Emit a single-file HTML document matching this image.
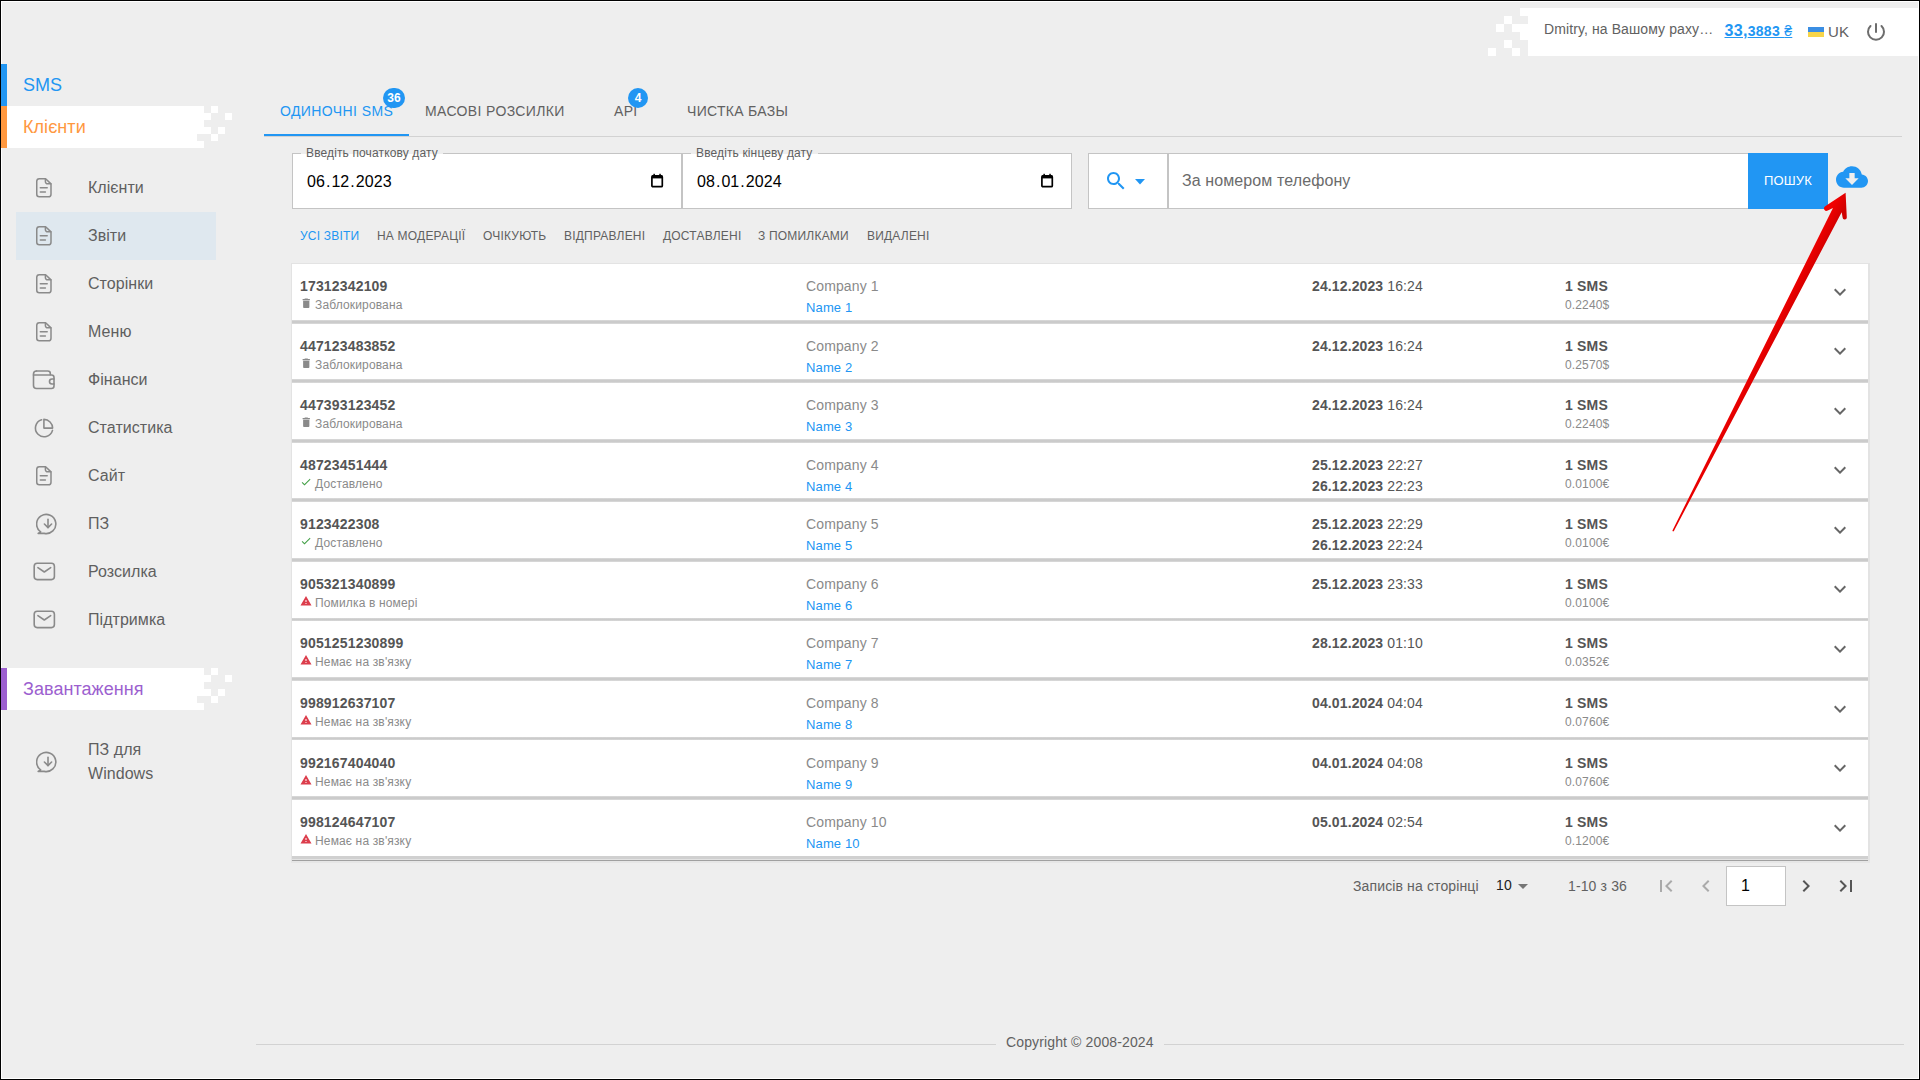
<!DOCTYPE html>
<html><head><meta charset="utf-8">
<style>
*{box-sizing:border-box;margin:0;padding:0}
html,body{width:1920px;height:1080px;overflow:hidden;background:#eeeeee;font-family:"Liberation Sans",sans-serif;color:#555}
.a{position:absolute}
.t{position:absolute;white-space:nowrap;line-height:normal}
#frame1{position:absolute;left:0;top:0;width:1920px;height:1080px;border:1px solid #000;z-index:100;pointer-events:none}
#frame2{position:absolute;left:1px;top:1px;width:1918px;height:1078px;border:1px solid #fff;z-index:0}
.ico{position:absolute;fill:none;stroke:#8a8a8a;stroke-width:1.6;stroke-linecap:round;stroke-linejoin:round}
</style></head><body>
<div id="frame2"></div>

<svg class="a" style="left:1480px;top:8px" width="440" height="48" viewBox="0 0 440 48"><g fill="#fff">
<rect x="40" y="0" width="400" height="8"/><rect x="48" y="8" width="392" height="8"/><rect x="32" y="16" width="408" height="8"/>
<rect x="40" y="24" width="400" height="8"/><rect x="48" y="32" width="392" height="8"/><rect x="48" y="40" width="392" height="8"/>
<rect x="24" y="8" width="8" height="8"/><rect x="16" y="16" width="8" height="8"/><rect x="24" y="32" width="8" height="8"/>
<rect x="32" y="40" width="8" height="8"/><rect x="8" y="40" width="8" height="8"/></g></svg>
<div class="t" style="left:1544px;top:21px;font-size:14px;color:#616161;letter-spacing:0.1px">Dmitry, на Вашому раху…</div>
<div class="t" style="left:1724.5px;top:22px;color:#2196f3;text-decoration:underline;font-size:16px;font-weight:bold;letter-spacing:0.3px">33,<span style="font-size:14px">3883 <span style="font-weight:normal">₴</span></span></div>
<div class="a" style="left:1808px;top:27px;width:16px;height:5px;background:#3b8ee3"></div>
<div class="a" style="left:1808px;top:32px;width:16px;height:5px;background:#f7d54a"></div>
<div class="t" style="left:1828px;top:23px;font-size:15px;color:#616161;;letter-spacing:0.05px">UK</div>
<svg class="a" style="left:1864px;top:21px" width="24" height="22" viewBox="0 0 24 22">
<path d="M12 2.9 V11" stroke="#6d6d6d" stroke-width="2" fill="none" stroke-linecap="round"/>
<path d="M6.5 5 A8 8 0 1 0 17.5 5" stroke="#6d6d6d" stroke-width="2" fill="none" stroke-linecap="round"/></svg>
<div class="a" style="left:1px;top:64px;width:6px;height:42px;background:#2196f3"></div>
<div class="t" style="left:23px;top:75px;font-size:18px;color:#2196f3;;letter-spacing:0.05px">SMS</div>
<div class="a" style="left:1px;top:106px;width:6px;height:42px;background:#ff983f"></div>
<svg class="a" style="left:7px;top:106px" width="230" height="42" viewBox="0 0 230 42"><g fill="#fff">
<rect x="0" y="0" width="197" height="7"/><rect x="0" y="7" width="204" height="7"/><rect x="0" y="14" width="197" height="7"/>
<rect x="0" y="21" width="204" height="7"/><rect x="0" y="28" width="190" height="7"/><rect x="0" y="35" width="197" height="7"/>
<rect x="204" y="0" width="7" height="7"/><rect x="218" y="7" width="7" height="7"/><rect x="211" y="21" width="7" height="7"/>
<rect x="204" y="28" width="7" height="7"/></g></svg>
<div class="t" style="left:23px;top:117px;font-size:18px;color:#ff983f;;letter-spacing:0.05px">Клієнти</div>
<div class="a" style="left:16px;top:212px;width:200px;height:48px;background:#dfe8ef"></div>
<svg class="ico" style="left:36px;top:178.4px;stroke-width:1.5" width="16" height="20" viewBox="0 0 16 20"><path d="M3.3 0.75 H9.6 L15 5.9 V16.2 A2.6 2.6 0 0 1 12.4 18.8 H3.3 A2.6 2.6 0 0 1 0.75 16.2 V3.3 A2.6 2.6 0 0 1 3.3 0.75 Z"/><path d="M9.4 0.9 V3.6 A2.2 2.2 0 0 0 11.6 5.8 H14.8"/><path d="M4.3 9.8 H11.2"/><path d="M4.3 14 H9.4"/></svg>
<div class="t" style="left:88px;top:179px;font-size:16px;color:#5f5f5f;;letter-spacing:0.05px">Клієнти</div>
<svg class="ico" style="left:36px;top:226.4px;stroke-width:1.5" width="16" height="20" viewBox="0 0 16 20"><path d="M3.3 0.75 H9.6 L15 5.9 V16.2 A2.6 2.6 0 0 1 12.4 18.8 H3.3 A2.6 2.6 0 0 1 0.75 16.2 V3.3 A2.6 2.6 0 0 1 3.3 0.75 Z"/><path d="M9.4 0.9 V3.6 A2.2 2.2 0 0 0 11.6 5.8 H14.8"/><path d="M4.3 9.8 H11.2"/><path d="M4.3 14 H9.4"/></svg>
<div class="t" style="left:88px;top:227px;font-size:16px;color:#5f5f5f;;letter-spacing:0.05px">Звіти</div>
<svg class="ico" style="left:36px;top:274.4px;stroke-width:1.5" width="16" height="20" viewBox="0 0 16 20"><path d="M3.3 0.75 H9.6 L15 5.9 V16.2 A2.6 2.6 0 0 1 12.4 18.8 H3.3 A2.6 2.6 0 0 1 0.75 16.2 V3.3 A2.6 2.6 0 0 1 3.3 0.75 Z"/><path d="M9.4 0.9 V3.6 A2.2 2.2 0 0 0 11.6 5.8 H14.8"/><path d="M4.3 9.8 H11.2"/><path d="M4.3 14 H9.4"/></svg>
<div class="t" style="left:88px;top:275px;font-size:16px;color:#5f5f5f;;letter-spacing:0.05px">Сторінки</div>
<svg class="ico" style="left:36px;top:322.4px;stroke-width:1.5" width="16" height="20" viewBox="0 0 16 20"><path d="M3.3 0.75 H9.6 L15 5.9 V16.2 A2.6 2.6 0 0 1 12.4 18.8 H3.3 A2.6 2.6 0 0 1 0.75 16.2 V3.3 A2.6 2.6 0 0 1 3.3 0.75 Z"/><path d="M9.4 0.9 V3.6 A2.2 2.2 0 0 0 11.6 5.8 H14.8"/><path d="M4.3 9.8 H11.2"/><path d="M4.3 14 H9.4"/></svg>
<div class="t" style="left:88px;top:323px;font-size:16px;color:#5f5f5f;;letter-spacing:0.05px">Меню</div>
<svg class="ico" style="left:32px;top:369.4px" width="24" height="21" viewBox="0 0 24 21"><path d="M4.5 2 H15.8 A2.5 2.5 0 0 1 18.3 4.5 V5.8"/><path d="M4.5 2 A3 3 0 0 0 1.5 5 V16.5 A3 3 0 0 0 4.5 19.5 H19.5 A2.5 2.5 0 0 0 22 17 V15"/><path d="M1.5 6 H19.5 A2.5 2.5 0 0 1 22 8.5 V10"/><path d="M22 10 H20 A2.5 2.5 0 0 0 20 15 H22 Z"/></svg>
<div class="t" style="left:88px;top:371px;font-size:16px;color:#5f5f5f;;letter-spacing:0.05px">Фінанси</div>
<svg class="ico" style="left:33px;top:416.9px" width="22" height="22" viewBox="0 0 22 22"><path d="M10.9 11.1 V2.4 A8.7 8.7 0 0 1 19.6 11.1 Z"/><path d="M8.6 2.7 A8.7 8.7 0 1 0 19.5 13.4"/></svg>
<div class="t" style="left:88px;top:419px;font-size:16px;color:#5f5f5f;;letter-spacing:0.05px">Статистика</div>
<svg class="ico" style="left:36px;top:466.4px;stroke-width:1.5" width="16" height="20" viewBox="0 0 16 20"><path d="M3.3 0.75 H9.6 L15 5.9 V16.2 A2.6 2.6 0 0 1 12.4 18.8 H3.3 A2.6 2.6 0 0 1 0.75 16.2 V3.3 A2.6 2.6 0 0 1 3.3 0.75 Z"/><path d="M9.4 0.9 V3.6 A2.2 2.2 0 0 0 11.6 5.8 H14.8"/><path d="M4.3 9.8 H11.2"/><path d="M4.3 14 H9.4"/></svg>
<div class="t" style="left:88px;top:467px;font-size:16px;color:#5f5f5f;;letter-spacing:0.05px">Сайт</div>
<svg class="ico" style="left:35.5px;top:511.9px" width="24" height="24" viewBox="0 0 24 24"><path d="M4.6 19.8 A9.6 9.6 0 1 1 8.2 21.4 H2.2 Z"/><path d="M12 7.4 V15.4"/><path d="M8.4 12 L12 15.6 L15.6 12"/></svg>
<div class="t" style="left:88px;top:515px;font-size:16px;color:#5f5f5f;;letter-spacing:0.05px">ПЗ</div>
<svg class="ico" style="left:33px;top:562.4px" width="23" height="19" viewBox="0 0 23 19"><rect x="1.2" y="1.2" width="20.2" height="16.4" rx="3"/><path d="M4.9 5.6 L11.3 10 L17.7 5.6"/></svg>
<div class="t" style="left:88px;top:563px;font-size:16px;color:#5f5f5f;;letter-spacing:0.05px">Розсилка</div>
<svg class="ico" style="left:33px;top:610.4px" width="23" height="19" viewBox="0 0 23 19"><rect x="1.2" y="1.2" width="20.2" height="16.4" rx="3"/><path d="M4.9 5.6 L11.3 10 L17.7 5.6"/></svg>
<div class="t" style="left:88px;top:611px;font-size:16px;color:#5f5f5f;;letter-spacing:0.05px">Підтримка</div>
<div class="a" style="left:1px;top:668px;width:6px;height:42px;background:#9c5fcf"></div>
<svg class="a" style="left:7px;top:668px" width="230" height="42" viewBox="0 0 230 42"><g fill="#fff">
<rect x="0" y="0" width="197" height="7"/><rect x="0" y="7" width="204" height="7"/><rect x="0" y="14" width="197" height="7"/>
<rect x="0" y="21" width="204" height="7"/><rect x="0" y="28" width="190" height="7"/><rect x="0" y="35" width="197" height="7"/>
<rect x="204" y="0" width="7" height="7"/><rect x="218" y="7" width="7" height="7"/><rect x="211" y="21" width="7" height="7"/>
<rect x="204" y="28" width="7" height="7"/></g></svg>
<div class="t" style="left:23px;top:679px;font-size:18px;color:#9c5fcf;;letter-spacing:0.05px">Завантаження</div>
<svg class="ico" style="left:35.5px;top:750px" width="24" height="24" viewBox="0 0 24 24"><path d="M4.6 19.8 A9.6 9.6 0 1 1 8.2 21.4 H2.2 Z"/><path d="M12 7.4 V15.4"/><path d="M8.4 12 L12 15.6 L15.6 12"/></svg>
<div class="t" style="left:88px;top:741px;font-size:16px;color:#5f5f5f;;letter-spacing:0.05px">ПЗ для</div>
<div class="t" style="left:88px;top:765px;font-size:16px;color:#5f5f5f;;letter-spacing:0.05px">Windows</div>
<div class="t" style="left:280px;top:103px;font-size:14px;color:#2196f3;letter-spacing:0.4px">ОДИНОЧНІ SMS</div>
<div class="t" style="left:425px;top:103px;font-size:14px;color:#616161;letter-spacing:0.36px">МАСОВІ РОЗСИЛКИ</div>
<div class="t" style="left:614px;top:103px;font-size:14px;color:#616161;letter-spacing:0.3px">API</div>
<div class="t" style="left:687px;top:103px;font-size:14px;color:#616161;letter-spacing:0.3px">ЧИСТКА БАЗЫ</div>
<div class="a" style="left:264px;top:136px;width:1638px;height:1px;background:#d2d2d2"></div>
<div class="a" style="left:264px;top:134px;width:145px;height:2px;background:#2196f3"></div>
<div class="a" style="left:382.9px;top:88px;width:22px;height:20px;border-radius:10px;background:#2196f3;color:#fff;font-size:12px;font-weight:bold;text-align:center;line-height:20px">36</div>
<div class="a" style="left:627.85px;top:88px;width:20.3px;height:20px;border-radius:10px;background:#2196f3;color:#fff;font-size:12px;font-weight:bold;text-align:center;line-height:20px">4</div>
<div class="a" style="left:292px;top:153px;width:390px;height:56px;background:#fff;border:1px solid #c4c4c4"></div>
<div class="a" style="left:301px;top:153px;width:142px;height:1px;background:#eeeeee"></div>
<div class="t" style="left:306px;top:146px;font-size:12px;color:#5f5f5f;;letter-spacing:0.13px">Введіть початкову дату</div>
<div class="t" style="left:307px;top:173px;font-size:16px;color:#000;;letter-spacing:0.05px">06<span style="margin:0 1px">.</span>12<span style="margin:0 1px">.</span>2023</div>
<svg class="a" style="left:651.2px;top:172.5px" width="13" height="15" viewBox="0 0 13 15"><rect x="0.9" y="2.9" width="10.4" height="10.8" rx="1" fill="none" stroke="#000" stroke-width="1.7"/><rect x="0.9" y="2.4" width="10.4" height="3" fill="#000"/><rect x="2.4" y="0.8" width="1.5" height="2.5" fill="#000"/><rect x="8.3" y="0.8" width="1.5" height="2.5" fill="#000"/></svg>
<div class="a" style="left:682px;top:153px;width:390px;height:56px;background:#fff;border:1px solid #c4c4c4"></div>
<div class="a" style="left:691px;top:153px;width:127px;height:1px;background:#eeeeee"></div>
<div class="t" style="left:696px;top:146px;font-size:12px;color:#5f5f5f;;letter-spacing:0.13px">Введіть кінцеву дату</div>
<div class="t" style="left:697px;top:173px;font-size:16px;color:#000;;letter-spacing:0.05px">08<span style="margin:0 1px">.</span>01<span style="margin:0 1px">.</span>2024</div>
<svg class="a" style="left:1041.2px;top:172.5px" width="13" height="15" viewBox="0 0 13 15"><rect x="0.9" y="2.9" width="10.4" height="10.8" rx="1" fill="none" stroke="#000" stroke-width="1.7"/><rect x="0.9" y="2.4" width="10.4" height="3" fill="#000"/><rect x="2.4" y="0.8" width="1.5" height="2.5" fill="#000"/><rect x="8.3" y="0.8" width="1.5" height="2.5" fill="#000"/></svg>
<div class="a" style="left:1088px;top:153px;width:81px;height:56px;background:#fff;border:1px solid #c4c4c4"></div>
<div class="a" style="left:1167px;top:153px;width:582px;height:56px;background:#fff;border:1px solid #c4c4c4;border-left:2px solid #c4c4c4"></div>
<svg class="a" style="left:1104px;top:169px" width="24" height="24" viewBox="0 0 24 24"><path fill="#2196f3" d="M15.5 14h-.79l-.28-.27C15.41 12.59 16 11.11 16 9.5 16 5.91 13.09 3 9.5 3S3 5.91 3 9.5 5.91 16 9.5 16c1.61 0 3.09-.59 4.23-1.57l.27.28v.79l5 4.99L20.49 19l-4.99-5zm-6 0C7.01 14 5 11.99 5 9.5S7.01 5 9.5 5 14 7.01 14 9.5 11.99 14 9.5 14z"/></svg>
<svg class="a" style="left:1135px;top:178.7px" width="10" height="6" viewBox="0 0 10 6"><path d="M0 0 H10 L5 5.5 Z" fill="#2196f3"/></svg>
<div class="t" style="left:1182px;top:172px;font-size:16px;color:#6b6b6b;letter-spacing:0.1px">За номером телефону</div>
<div class="a" style="left:1748px;top:153px;width:80px;height:56px;background:#2196f3"></div>
<div class="t" style="left:1764px;top:173px;font-size:13px;color:#fff;;letter-spacing:0.13px">ПОШУК</div>
<svg class="a" style="left:1836px;top:161px" width="32" height="32" viewBox="0 0 24 24"><path fill="#2196f3" d="M19.35 10.04C18.67 6.59 15.64 4 12 4 9.11 4 6.6 5.64 5.35 8.04 2.34 8.36 0 10.91 0 14c0 3.31 2.69 6 6 6h13c2.76 0 5-2.24 5-5 0-2.64-2.05-4.78-4.65-4.96zM17 13l-5 5-5-5h3V9h4v4h3z"/></svg>
<div class="t" style="left:300px;top:229px;font-size:12px;color:#2196f3;letter-spacing:0.2px">УСІ ЗВІТИ</div>
<div class="t" style="left:377px;top:229px;font-size:12px;color:#616161;letter-spacing:0.2px">НА МОДЕРАЦІЇ</div>
<div class="t" style="left:483px;top:229px;font-size:12px;color:#616161;letter-spacing:0.2px">ОЧІКУЮТЬ</div>
<div class="t" style="left:564px;top:229px;font-size:12px;color:#616161;letter-spacing:0.2px">ВІДПРАВЛЕНІ</div>
<div class="t" style="left:663px;top:229px;font-size:12px;color:#616161;letter-spacing:0.2px">ДОСТАВЛЕНІ</div>
<div class="t" style="left:758px;top:229px;font-size:12px;color:#616161;letter-spacing:0.2px">З ПОМИЛКАМИ</div>
<div class="t" style="left:867px;top:229px;font-size:12px;color:#616161;letter-spacing:0.2px">ВИДАЛЕНІ</div>
<div class="a" style="left:291px;top:263px;width:1579px;height:600px;background:#e3e3e3"></div>
<div class="a" style="left:292px;top:264px;width:1576px;height:56px;background:#fff"></div>
<div class="a" style="left:292px;top:320px;width:1576px;height:4px;background:linear-gradient(#dedede,#cbcbcb 30%,#cbcbcb 70%,#dedede)"></div>
<div class="t" style="left:300px;top:278px;font-size:14px;color:#555;font-weight:bold;letter-spacing:0.17px">17312342109</div>
<svg class="a" style="left:299.6px;top:296.9px" width="12.5" height="12.5" viewBox="0 0 24 24"><path fill="#8a8a8a" d="M6 19c0 1.1.9 2 2 2h8c1.1 0 2-.9 2-2V7H6v12zM19 4h-3.5l-1-1h-5l-1 1H5v2h14V4z"/></svg>
<div class="t" style="left:315px;top:298px;font-size:12px;color:#8a8a8a;letter-spacing:0.15px">Заблокирована</div>
<div class="t" style="left:806px;top:278px;font-size:14px;color:#8a8a8a;;letter-spacing:0.13px">Company 1</div>
<div class="t" style="left:806px;top:300px;font-size:13px;color:#2196f3;;letter-spacing:0.13px">Name 1</div>
<div class="t" style="left:1312px;top:278px;font-size:14px;color:#555;letter-spacing:0.12px"><b>24.12.2023</b> 16:24</div>
<div class="t" style="left:1565px;top:278px;font-size:14px;color:#555;font-weight:bold;letter-spacing:0.2px">1 SMS</div>
<div class="t" style="left:1565px;top:298px;font-size:12px;color:#8a8a8a;;letter-spacing:0.13px">0.2240$</div>
<svg class="a" style="left:1828px;top:280px" width="24" height="24" viewBox="0 0 24 24"><path fill="#666" d="M16.59 8.59L12 13.17 7.41 8.59 6 10l6 6 6-6z"/></svg>
<div class="a" style="left:292px;top:324px;width:1576px;height:55px;background:#fff"></div>
<div class="a" style="left:292px;top:379px;width:1576px;height:4px;background:linear-gradient(#dedede,#cbcbcb 30%,#cbcbcb 70%,#dedede)"></div>
<div class="t" style="left:300px;top:338px;font-size:14px;color:#555;font-weight:bold;letter-spacing:0.17px">447123483852</div>
<svg class="a" style="left:299.6px;top:356.9px" width="12.5" height="12.5" viewBox="0 0 24 24"><path fill="#8a8a8a" d="M6 19c0 1.1.9 2 2 2h8c1.1 0 2-.9 2-2V7H6v12zM19 4h-3.5l-1-1h-5l-1 1H5v2h14V4z"/></svg>
<div class="t" style="left:315px;top:358px;font-size:12px;color:#8a8a8a;letter-spacing:0.15px">Заблокирована</div>
<div class="t" style="left:806px;top:338px;font-size:14px;color:#8a8a8a;;letter-spacing:0.13px">Company 2</div>
<div class="t" style="left:806px;top:360px;font-size:13px;color:#2196f3;;letter-spacing:0.13px">Name 2</div>
<div class="t" style="left:1312px;top:338px;font-size:14px;color:#555;letter-spacing:0.12px"><b>24.12.2023</b> 16:24</div>
<div class="t" style="left:1565px;top:338px;font-size:14px;color:#555;font-weight:bold;letter-spacing:0.2px">1 SMS</div>
<div class="t" style="left:1565px;top:358px;font-size:12px;color:#8a8a8a;;letter-spacing:0.13px">0.2570$</div>
<svg class="a" style="left:1828px;top:339px" width="24" height="24" viewBox="0 0 24 24"><path fill="#666" d="M16.59 8.59L12 13.17 7.41 8.59 6 10l6 6 6-6z"/></svg>
<div class="a" style="left:292px;top:383px;width:1576px;height:56px;background:#fff"></div>
<div class="a" style="left:292px;top:439px;width:1576px;height:4px;background:linear-gradient(#dedede,#cbcbcb 30%,#cbcbcb 70%,#dedede)"></div>
<div class="t" style="left:300px;top:397px;font-size:14px;color:#555;font-weight:bold;letter-spacing:0.17px">447393123452</div>
<svg class="a" style="left:299.6px;top:415.9px" width="12.5" height="12.5" viewBox="0 0 24 24"><path fill="#8a8a8a" d="M6 19c0 1.1.9 2 2 2h8c1.1 0 2-.9 2-2V7H6v12zM19 4h-3.5l-1-1h-5l-1 1H5v2h14V4z"/></svg>
<div class="t" style="left:315px;top:417px;font-size:12px;color:#8a8a8a;letter-spacing:0.15px">Заблокирована</div>
<div class="t" style="left:806px;top:397px;font-size:14px;color:#8a8a8a;;letter-spacing:0.13px">Company 3</div>
<div class="t" style="left:806px;top:419px;font-size:13px;color:#2196f3;;letter-spacing:0.13px">Name 3</div>
<div class="t" style="left:1312px;top:397px;font-size:14px;color:#555;letter-spacing:0.12px"><b>24.12.2023</b> 16:24</div>
<div class="t" style="left:1565px;top:397px;font-size:14px;color:#555;font-weight:bold;letter-spacing:0.2px">1 SMS</div>
<div class="t" style="left:1565px;top:417px;font-size:12px;color:#8a8a8a;;letter-spacing:0.13px">0.2240$</div>
<svg class="a" style="left:1828px;top:399px" width="24" height="24" viewBox="0 0 24 24"><path fill="#666" d="M16.59 8.59L12 13.17 7.41 8.59 6 10l6 6 6-6z"/></svg>
<div class="a" style="left:292px;top:443px;width:1576px;height:55px;background:#fff"></div>
<div class="a" style="left:292px;top:498px;width:1576px;height:4px;background:linear-gradient(#dedede,#cbcbcb 30%,#cbcbcb 70%,#dedede)"></div>
<div class="t" style="left:300px;top:457px;font-size:14px;color:#555;font-weight:bold;letter-spacing:0.17px">48723451444</div>
<svg class="a" style="left:300px;top:476px" width="12" height="12" viewBox="0 0 24 24"><path fill="#43a047" d="M9 16.17L4.83 12l-1.42 1.41L9 19 21 7l-1.41-1.41z"/></svg>
<div class="t" style="left:315px;top:477px;font-size:12px;color:#8a8a8a;letter-spacing:0.15px">Доставлено</div>
<div class="t" style="left:806px;top:457px;font-size:14px;color:#8a8a8a;;letter-spacing:0.13px">Company 4</div>
<div class="t" style="left:806px;top:479px;font-size:13px;color:#2196f3;;letter-spacing:0.13px">Name 4</div>
<div class="t" style="left:1312px;top:457px;font-size:14px;color:#555;letter-spacing:0.12px"><b>25.12.2023</b> 22:27</div>
<div class="t" style="left:1312px;top:478px;font-size:14px;color:#555;letter-spacing:0.12px"><b>26.12.2023</b> 22:23</div>
<div class="t" style="left:1565px;top:457px;font-size:14px;color:#555;font-weight:bold;letter-spacing:0.2px">1 SMS</div>
<div class="t" style="left:1565px;top:477px;font-size:12px;color:#8a8a8a;;letter-spacing:0.13px">0.0100€</div>
<svg class="a" style="left:1828px;top:458px" width="24" height="24" viewBox="0 0 24 24"><path fill="#666" d="M16.59 8.59L12 13.17 7.41 8.59 6 10l6 6 6-6z"/></svg>
<div class="a" style="left:292px;top:502px;width:1576px;height:56px;background:#fff"></div>
<div class="a" style="left:292px;top:558px;width:1576px;height:4px;background:linear-gradient(#dedede,#cbcbcb 30%,#cbcbcb 70%,#dedede)"></div>
<div class="t" style="left:300px;top:516px;font-size:14px;color:#555;font-weight:bold;letter-spacing:0.17px">9123422308</div>
<svg class="a" style="left:300px;top:535px" width="12" height="12" viewBox="0 0 24 24"><path fill="#43a047" d="M9 16.17L4.83 12l-1.42 1.41L9 19 21 7l-1.41-1.41z"/></svg>
<div class="t" style="left:315px;top:536px;font-size:12px;color:#8a8a8a;letter-spacing:0.15px">Доставлено</div>
<div class="t" style="left:806px;top:516px;font-size:14px;color:#8a8a8a;;letter-spacing:0.13px">Company 5</div>
<div class="t" style="left:806px;top:538px;font-size:13px;color:#2196f3;;letter-spacing:0.13px">Name 5</div>
<div class="t" style="left:1312px;top:516px;font-size:14px;color:#555;letter-spacing:0.12px"><b>25.12.2023</b> 22:29</div>
<div class="t" style="left:1312px;top:537px;font-size:14px;color:#555;letter-spacing:0.12px"><b>26.12.2023</b> 22:24</div>
<div class="t" style="left:1565px;top:516px;font-size:14px;color:#555;font-weight:bold;letter-spacing:0.2px">1 SMS</div>
<div class="t" style="left:1565px;top:536px;font-size:12px;color:#8a8a8a;;letter-spacing:0.13px">0.0100€</div>
<svg class="a" style="left:1828px;top:518px" width="24" height="24" viewBox="0 0 24 24"><path fill="#666" d="M16.59 8.59L12 13.17 7.41 8.59 6 10l6 6 6-6z"/></svg>
<div class="a" style="left:292px;top:562px;width:1576px;height:56px;background:#fff"></div>
<div class="a" style="left:292px;top:618px;width:1576px;height:3px;background:linear-gradient(#dedede,#cbcbcb 30%,#cbcbcb 70%,#dedede)"></div>
<div class="t" style="left:300px;top:576px;font-size:14px;color:#555;font-weight:bold;letter-spacing:0.17px">905321340899</div>
<svg class="a" style="left:300px;top:595px" width="12" height="12" viewBox="0 0 24 24"><path fill="#dc3d4c" d="M1 21h22L12 2 1 21zm12-3h-2v-2h2v2zm0-4h-2v-4h2v4z"/></svg>
<div class="t" style="left:315px;top:596px;font-size:12px;color:#8a8a8a;letter-spacing:0.15px">Помилка в номері</div>
<div class="t" style="left:806px;top:576px;font-size:14px;color:#8a8a8a;;letter-spacing:0.13px">Company 6</div>
<div class="t" style="left:806px;top:598px;font-size:13px;color:#2196f3;;letter-spacing:0.13px">Name 6</div>
<div class="t" style="left:1312px;top:576px;font-size:14px;color:#555;letter-spacing:0.12px"><b>25.12.2023</b> 23:33</div>
<div class="t" style="left:1565px;top:576px;font-size:14px;color:#555;font-weight:bold;letter-spacing:0.2px">1 SMS</div>
<div class="t" style="left:1565px;top:596px;font-size:12px;color:#8a8a8a;;letter-spacing:0.13px">0.0100€</div>
<svg class="a" style="left:1828px;top:577px" width="24" height="24" viewBox="0 0 24 24"><path fill="#666" d="M16.59 8.59L12 13.17 7.41 8.59 6 10l6 6 6-6z"/></svg>
<div class="a" style="left:292px;top:621px;width:1576px;height:56px;background:#fff"></div>
<div class="a" style="left:292px;top:677px;width:1576px;height:4px;background:linear-gradient(#dedede,#cbcbcb 30%,#cbcbcb 70%,#dedede)"></div>
<div class="t" style="left:300px;top:635px;font-size:14px;color:#555;font-weight:bold;letter-spacing:0.17px">9051251230899</div>
<svg class="a" style="left:300px;top:654px" width="12" height="12" viewBox="0 0 24 24"><path fill="#dc3d4c" d="M1 21h22L12 2 1 21zm12-3h-2v-2h2v2zm0-4h-2v-4h2v4z"/></svg>
<div class="t" style="left:315px;top:655px;font-size:12px;color:#8a8a8a;letter-spacing:0.15px">Немає на зв'язку</div>
<div class="t" style="left:806px;top:635px;font-size:14px;color:#8a8a8a;;letter-spacing:0.13px">Company 7</div>
<div class="t" style="left:806px;top:657px;font-size:13px;color:#2196f3;;letter-spacing:0.13px">Name 7</div>
<div class="t" style="left:1312px;top:635px;font-size:14px;color:#555;letter-spacing:0.12px"><b>28.12.2023</b> 01:10</div>
<div class="t" style="left:1565px;top:635px;font-size:14px;color:#555;font-weight:bold;letter-spacing:0.2px">1 SMS</div>
<div class="t" style="left:1565px;top:655px;font-size:12px;color:#8a8a8a;;letter-spacing:0.13px">0.0352€</div>
<svg class="a" style="left:1828px;top:637px" width="24" height="24" viewBox="0 0 24 24"><path fill="#666" d="M16.59 8.59L12 13.17 7.41 8.59 6 10l6 6 6-6z"/></svg>
<div class="a" style="left:292px;top:681px;width:1576px;height:56px;background:#fff"></div>
<div class="a" style="left:292px;top:737px;width:1576px;height:3px;background:linear-gradient(#dedede,#cbcbcb 30%,#cbcbcb 70%,#dedede)"></div>
<div class="t" style="left:300px;top:695px;font-size:14px;color:#555;font-weight:bold;letter-spacing:0.17px">998912637107</div>
<svg class="a" style="left:300px;top:714px" width="12" height="12" viewBox="0 0 24 24"><path fill="#dc3d4c" d="M1 21h22L12 2 1 21zm12-3h-2v-2h2v2zm0-4h-2v-4h2v4z"/></svg>
<div class="t" style="left:315px;top:715px;font-size:12px;color:#8a8a8a;letter-spacing:0.15px">Немає на зв'язку</div>
<div class="t" style="left:806px;top:695px;font-size:14px;color:#8a8a8a;;letter-spacing:0.13px">Company 8</div>
<div class="t" style="left:806px;top:717px;font-size:13px;color:#2196f3;;letter-spacing:0.13px">Name 8</div>
<div class="t" style="left:1312px;top:695px;font-size:14px;color:#555;letter-spacing:0.12px"><b>04.01.2024</b> 04:04</div>
<div class="t" style="left:1565px;top:695px;font-size:14px;color:#555;font-weight:bold;letter-spacing:0.2px">1 SMS</div>
<div class="t" style="left:1565px;top:715px;font-size:12px;color:#8a8a8a;;letter-spacing:0.13px">0.0760€</div>
<svg class="a" style="left:1828px;top:697px" width="24" height="24" viewBox="0 0 24 24"><path fill="#666" d="M16.59 8.59L12 13.17 7.41 8.59 6 10l6 6 6-6z"/></svg>
<div class="a" style="left:292px;top:740px;width:1576px;height:56px;background:#fff"></div>
<div class="a" style="left:292px;top:796px;width:1576px;height:4px;background:linear-gradient(#dedede,#cbcbcb 30%,#cbcbcb 70%,#dedede)"></div>
<div class="t" style="left:300px;top:755px;font-size:14px;color:#555;font-weight:bold;letter-spacing:0.17px">992167404040</div>
<svg class="a" style="left:300px;top:774px" width="12" height="12" viewBox="0 0 24 24"><path fill="#dc3d4c" d="M1 21h22L12 2 1 21zm12-3h-2v-2h2v2zm0-4h-2v-4h2v4z"/></svg>
<div class="t" style="left:315px;top:775px;font-size:12px;color:#8a8a8a;letter-spacing:0.15px">Немає на зв'язку</div>
<div class="t" style="left:806px;top:755px;font-size:14px;color:#8a8a8a;;letter-spacing:0.13px">Company 9</div>
<div class="t" style="left:806px;top:777px;font-size:13px;color:#2196f3;;letter-spacing:0.13px">Name 9</div>
<div class="t" style="left:1312px;top:755px;font-size:14px;color:#555;letter-spacing:0.12px"><b>04.01.2024</b> 04:08</div>
<div class="t" style="left:1565px;top:755px;font-size:14px;color:#555;font-weight:bold;letter-spacing:0.2px">1 SMS</div>
<div class="t" style="left:1565px;top:775px;font-size:12px;color:#8a8a8a;;letter-spacing:0.13px">0.0760€</div>
<svg class="a" style="left:1828px;top:756px" width="24" height="24" viewBox="0 0 24 24"><path fill="#666" d="M16.59 8.59L12 13.17 7.41 8.59 6 10l6 6 6-6z"/></svg>
<div class="a" style="left:292px;top:800px;width:1576px;height:56px;background:#fff"></div>
<div class="t" style="left:300px;top:814px;font-size:14px;color:#555;font-weight:bold;letter-spacing:0.17px">998124647107</div>
<svg class="a" style="left:300px;top:833px" width="12" height="12" viewBox="0 0 24 24"><path fill="#dc3d4c" d="M1 21h22L12 2 1 21zm12-3h-2v-2h2v2zm0-4h-2v-4h2v4z"/></svg>
<div class="t" style="left:315px;top:834px;font-size:12px;color:#8a8a8a;letter-spacing:0.15px">Немає на зв'язку</div>
<div class="t" style="left:806px;top:814px;font-size:14px;color:#8a8a8a;;letter-spacing:0.13px">Company 10</div>
<div class="t" style="left:806px;top:836px;font-size:13px;color:#2196f3;;letter-spacing:0.13px">Name 10</div>
<div class="t" style="left:1312px;top:814px;font-size:14px;color:#555;letter-spacing:0.12px"><b>05.01.2024</b> 02:54</div>
<div class="t" style="left:1565px;top:814px;font-size:14px;color:#555;font-weight:bold;letter-spacing:0.2px">1 SMS</div>
<div class="t" style="left:1565px;top:834px;font-size:12px;color:#8a8a8a;;letter-spacing:0.13px">0.1200€</div>
<svg class="a" style="left:1828px;top:816px" width="24" height="24" viewBox="0 0 24 24"><path fill="#666" d="M16.59 8.59L12 13.17 7.41 8.59 6 10l6 6 6-6z"/></svg>
<div class="a" style="left:292px;top:856px;width:1576px;height:3px;background:#d0d0d0"></div>
<div class="a" style="left:292px;top:860px;width:1576px;height:1px;background:#a0a0a0"></div>
<div class="a" style="left:291px;top:861px;width:1579px;height:2px;background:#e6e6e6"></div>
<div class="t" style="left:1353px;top:878px;font-size:14px;color:#616161;;letter-spacing:0.13px">Записів на сторінці</div>
<div class="t" style="left:1496px;top:877px;font-size:14px;color:#212121;;letter-spacing:0.13px">10</div>
<svg class="a" style="left:1518px;top:884px" width="10" height="6" viewBox="0 0 10 6"><path d="M0 0 H10 L5 5 Z" fill="#757575"/></svg>
<div class="t" style="left:1568px;top:878px;font-size:14px;color:#616161;;letter-spacing:0.13px">1-10 з 36</div>
<svg class="a" style="left:1654px;top:874px" width="24" height="24" viewBox="0 0 24 24"><path fill="#aaa" d="M18.41 16.59L13.82 12l4.59-4.59L17 6l-6 6 6 6zM6 6h2v12H6z"/></svg>
<svg class="a" style="left:1694px;top:874px" width="24" height="24" viewBox="0 0 24 24"><path fill="#aaa" d="M15.41 7.41L14 6l-6 6 6 6 1.41-1.41L10.83 12z"/></svg>
<div class="a" style="left:1726px;top:866px;width:60px;height:40px;background:#fff;border:1px solid #c4c4c4"></div>
<div class="t" style="left:1741px;top:877px;font-size:16px;color:#000;;letter-spacing:0.05px">1</div>
<svg class="a" style="left:1794px;top:874px" width="24" height="24" viewBox="0 0 24 24"><path fill="#555" d="M10 6L8.59 7.41 13.17 12l-4.58 4.59L10 18l6-6z"/></svg>
<svg class="a" style="left:1834px;top:874px" width="24" height="24" viewBox="0 0 24 24"><path fill="#555" d="M5.59 7.41L10.18 12l-4.59 4.59L7 18l6-6-6-6zM16 6h2v12h-2z"/></svg>
<div class="a" style="left:256px;top:1044px;width:740px;height:1px;background:#d2d2d2"></div>
<div class="a" style="left:1164px;top:1044px;width:740px;height:1px;background:#d2d2d2"></div>
<div class="t" style="left:1006px;top:1034px;font-size:14px;color:#616161;;letter-spacing:0.13px">Copyright © 2008-2024</div>
<svg class="a" style="left:0;top:0;z-index:50" width="1920" height="1080" viewBox="0 0 1920 1080">
<defs><linearGradient id="rg" gradientUnits="userSpaceOnUse" x1="1824" y1="222" x2="1836" y2="228"><stop offset="0" stop-color="#f20000"/><stop offset="1" stop-color="#cf0000"/></linearGradient></defs>
<path d="M1845.6 192.8 L1825.2 206.3 A2 2 0 0 0 1827.8 210.5 L1832.96 208.1 L1672.45 530.5 A0.85 0.85 0 0 0 1674.15 530.5 L1841.69 212.2 L1842.6 217.4 A2.1 2.1 0 0 0 1846.8 217.2 Z" fill="url(#rg)"/>
</svg>
<div id="frame1"></div>
</body></html>
